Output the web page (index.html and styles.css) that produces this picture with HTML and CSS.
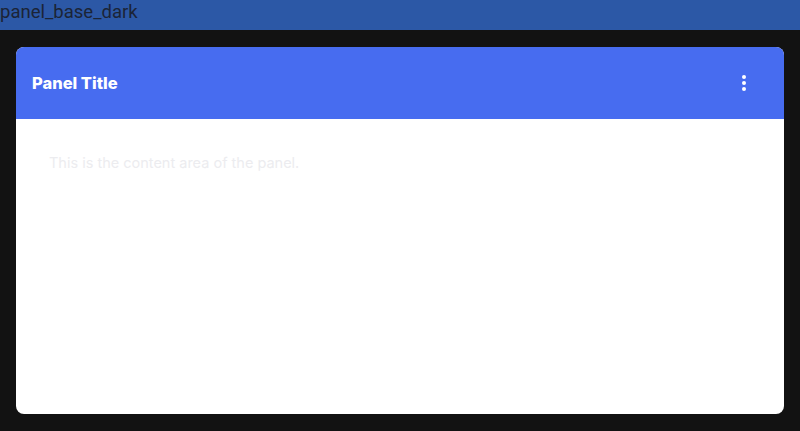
FILE: index.html
```html
<!DOCTYPE html>
<html>
<head>
<meta charset="utf-8">
<link rel="stylesheet" href="styles.css">
</head>
<body>
<div class="topbar">panel_base_dark</div>
<main class="stage">
  <section class="panel">
    <header class="panel-header">
      <h1 class="panel-title">Panel Title</h1>
      <button class="menu-btn" aria-label="More">
        <svg width="4" height="16" viewBox="0 0 4 16"><circle cx="2" cy="2" r="2" fill="#fff"/><circle cx="2" cy="8" r="2" fill="#fff"/><circle cx="2" cy="14" r="2" fill="#fff"/></svg>
      </button>
    </header>
    <div class="panel-body">
      <p class="panel-text">This is the content area of the panel.</p>
    </div>
  </section>
</main>
</body>
</html>
```
FILE: styles.css
```css
* { box-sizing: border-box; }
html, body { margin: 0; height: 100%; }
body {
  background: #121212;
  font-family: "Inter", sans-serif;
  display: flex;
  flex-direction: column;
}
.topbar {
  height: 30px;
  background: #2c58a6;
  color: #1b2436;
  font-family: Roboto, "Liberation Sans", sans-serif;
  font-size: 18.5px;
  line-height: 24px;
}
.stage {
  flex: 1;
  padding: 17px 16px;
  display: flex;
}
.panel {
  flex: 1;
  background: #fff;
  border-radius: 8px;
  overflow: hidden;
  display: flex;
  flex-direction: column;
}
.panel-header {
  height: 72px;
  background: #476cf0;
  display: flex;
  align-items: center;
  justify-content: space-between;
  padding: 0 24px 0 16px;
}
.panel-title {
  margin: 0;
  color: #fff;
  font-family: "Inter", sans-serif;
  font-size: 16.5px;
  font-weight: 800;
}
.menu-btn {
  width: 32px;
  height: 32px;
  border: 0;
  background: transparent;
  padding: 0;
  display: flex;
  align-items: center;
  justify-content: center;
}
.panel-body {
  flex: 1;
  padding: 34px 32px 32px 33px;
}
.panel-text {
  margin: 0;
  color: #ececef;
  font-family: "Inter", sans-serif;
  font-size: 14.5px;
  line-height: 20px;
}
```
